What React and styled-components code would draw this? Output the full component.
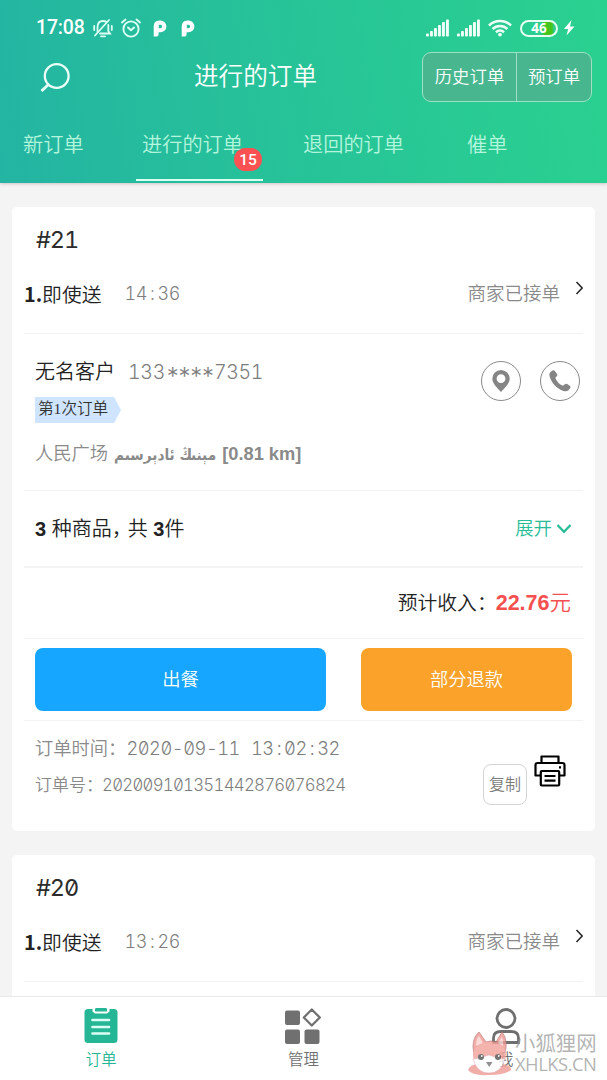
import React from "react";
import styled, { createGlobalStyle } from "styled-components";

const cjk = '"Noto Sans CJK SC", sans-serif';

const Global = createGlobalStyle`
  * { box-sizing: border-box; }
  body { margin: 0; background: #f4f4f4; }
`;

const Screen = styled.div`
  width: 607px;
  height: 1080px;
  display: flex;
  flex-direction: column;
  position: relative;
  overflow: hidden;
  background: #f4f4f4;
  font-family: "Liberation Sans", ${cjk};
  font-weight: 350;
  color: #222;
  white-space: nowrap;
`;

const Header = styled.header`
  flex: none;
  height: 183px;
  display: flex;
  flex-direction: column;
  color: #fff;
  background: linear-gradient(80deg, #24b4a3 0%, #26c09a 38%, #28c895 66%, #2ad18f 100%);
  box-shadow: 0 1px 3px rgba(120, 90, 100, 0.3);
  z-index: 1;
`;

const StatusBar = styled.div`
  height: 52px;
  padding: 4px 32px 0 36px;
  display: flex;
  align-items: center;
  justify-content: space-between;
`;

const StatusGroup = styled.div`
  display: flex;
  align-items: center;
  gap: ${(p) => p.$gap}px;
  padding-left: ${(p) => p.$pl || 0}px;
`;

const Clock = styled.span`
  font: 500 19.4px/24px Roboto, sans-serif;
  letter-spacing: -0.1px;
  width: 49px;
  margin-right: 0;
`;

const Battery = styled.span`
  width: 38px;
  height: 17px;
  margin: 0 -2px 0 0;
  border: 2px solid #e9fff4;
  border-radius: 9px;
  background: linear-gradient(90deg, transparent 54%, #45c51c 68% 88%, transparent 94%);
  font: 700 13.5px/13px "Open Sans", sans-serif;
  text-align: center;
`;

const TitleBar = styled.div`
  height: 50px;
  padding: 0 15px 0 38px;
  display: grid;
  grid-template-columns: 156px 1fr auto;
  align-items: center;
`;

const Title = styled.h1`
  margin: 0;
  font: 350 24.6px/36px ${cjk};
  padding-bottom: 6px;
`;

const Segmented = styled.div`
  height: 50px;
  display: flex;
  border: 1px solid #9fe0c5;
  border-radius: 9px;
  background: #48b68f;
`;

const Segment = styled.button`
  width: ${(p) => p.$w}px;
  padding: 0 0 2px;
  border: 0;
  border-left: ${(p) => (p.$divided ? "1px solid #9fe0c5" : "0")};
  background: none;
  color: #fff;
  font: 350 17.4px/26px ${cjk};
`;

const Tabs = styled.nav`
  flex: 1;
  display: flex;
  align-items: stretch;
`;

const Tab = styled.div`
  position: relative;
  width: ${(p) => p.$w}px;
  margin-left: ${(p) => p.$ml}px;
  padding: 27px 0 0 ${(p) => (p.$active ? 6 : 0)}px;
  height: 79px;
  border-bottom: 2px solid ${(p) => (p.$active ? "#d8fff2" : "transparent")};
  color: #b5f5dd;
  font: 350 20.2px/30px ${cjk};
`;

const Badge = styled.span`
  position: absolute;
  left: 98px;
  top: 46px;
  width: 28px;
  height: 23px;
  border-radius: 12px;
  background: #fb5152;
  color: #fff;
  font: 500 15.5px/24px Roboto, sans-serif;
  text-align: center;
`;

const Feed = styled.main`
  flex: 1;
  min-height: 0;
  overflow: hidden;
  padding: 24px 12px 0;
  display: flex;
  flex-direction: column;
  gap: 24px;
`;

const Card = styled.article`
  flex: none;
  height: 624px;
  padding: 0 12px;
  border-radius: 5px;
  background: #fff;
`;

const Row = styled.div`
  height: ${(p) => p.$h}px;
  padding: ${(p) => p.$pad || "0"};
  display: flex;
  align-items: ${(p) => p.$align || "center"};
  justify-content: ${(p) => p.$justify || "space-between"};
  border-bottom: ${(p) => p.$line || 0}px solid #f3f3f3;
`;

const MonoText = styled.span`
  font-family: Inter, ${cjk};
  font-size: ${(p) => p.$size}px;
  line-height: 28px;
  font-weight: ${(p) => p.$weight || 300};
  color: ${(p) => p.$color || "#7d7d7d"};
  letter-spacing: ${(p) => p.$ls || 0}px;
  word-spacing: 6.5px;
  font-feature-settings: "tnum" 1, "zero" 1;
`;

const Colon = styled.span`
  padding: 0 3px;
`;

const Stars = styled.span`
  font-size: 24px;
  line-height: 20px;
  vertical-align: -6px;
  letter-spacing: -3.8px;
  margin-right: 2px;
`;

const Han = styled.span`
  font-family: ${cjk};
  font-size: ${(p) => p.$size}px;
  line-height: 28px;
  font-weight: 350;
  color: ${(p) => p.$color || "#222"};
  padding-bottom: ${(p) => p.$up || 0}px;
  margin-right: ${(p) => p.$mr || 0}px;
  b { font-weight: 700; }
`;

const Mixed = styled(Han)`
  font-family: "Liberation Sans", ${cjk};
  white-space: pre;
`;

const Comma = styled.span`
  display: inline-block;
  width: 16px;
`;

const Inline = styled.div`
  display: flex;
  align-items: center;
  gap: ${(p) => p.$gap}px;
`;

const Stack = styled.div`
  display: flex;
  flex-direction: column;
  align-items: flex-start;
`;

const Ribbon = styled.span`
  width: 86px;
  height: 26px;
  margin: 9px 0 17px;
  padding-left: 3px;
  background: #cfe5ff;
  clip-path: polygon(0 0, 92% 0, 100% 50%, 92% 100%, 0 100%);
  color: #333;
  font: 350 15.6px/24px "Liberation Serif", ${cjk};
`;

const Uyghur = styled.bdi`
  font: 700 15.2px/26px "DejaVu Sans Condensed", "DejaVu Sans", sans-serif;
  display: inline-block;
  width: 102px;
  text-align: center;
  margin: 0 6px 0 6px;
`;

const RoundButton = styled.button`
  width: 40px;
  height: 40px;
  margin-top: 4px;
  padding: 0;
  border: 1px solid #8a8a8a;
  border-radius: 50%;
  background: #fff;
  display: grid;
  place-items: center;
`;

const Action = styled.button`
  width: ${(p) => p.$w}px;
  height: 63px;
  padding: 0 0 4px;
  border: 0;
  border-radius: 8px;
  background: ${(p) => p.$bg};
  color: #fff;
  font: 350 18.3px/28px ${cjk};
`;

const CopyButton = styled.button`
  width: 44px;
  height: 41px;
  padding: 0 0 3px;
  border: 1px solid #d4d4d4;
  border-radius: 8px;
  background: #fff;
  color: #7c7c7c;
  font: 350 16px/24px ${cjk};
`;

const BottomNav = styled.nav`
  flex: none;
  height: 84px;
  display: grid;
  grid-template-columns: repeat(3, 1fr);
  background: #fff;
  border-top: 1px solid #e9e9e9;
`;

const NavItem = styled.div`
  display: flex;
  flex-direction: column;
  align-items: center;
  padding-top: 10px;
  color: ${(p) => p.$color};
  font: 350 15.4px/22px ${cjk};
  svg { margin-bottom: 3px; }
`;

const Watermark = styled.div`
  position: absolute;
  left: 467px;
  top: 1030px;
  display: flex;
  color: rgba(150, 150, 150, 0.72);
`;

const WatermarkText = styled.div`
  display: flex;
  flex-direction: column;
  margin-left: 2px;
  padding-top: 2px;
  font: 400 20.4px/22px "Open Sans", ${cjk};
`;

const WatermarkSite = styled.span`
  font-size: 18.4px;
  line-height: 20px;
  letter-spacing: -0.5px;
`;

const Svg = ({ w, h, children, ...rest }) => (
  <svg width={w} height={h} viewBox={`0 0 ${w} ${h}`} fill="none" {...rest}>{children}</svg>
);

const MuteIcon = () => (
  <Svg w={20} h={20} stroke="#dffff5" strokeWidth="1.8" strokeLinecap="round">
    <path d="M4.500 14V9.500C4.500 5.500 6.500 3 10 3C11.500 3 12.600 3.400 13.500 4.200M15.300 7V13L17 15.500H7" />
    <path d="M2 17.500L16 2M8 18.300H12M1.200 8V12M18.800 8V12" />
  </Svg>
);

const AlarmIcon = () => (
  <Svg w={20} h={20} stroke="#dffff5" strokeWidth="1.9" strokeLinecap="round" strokeLinejoin="round">
    <circle cx="10" cy="11" r="7.600" />
    <path d="M7 9.500L10 12.300L13 9.500M1 4.500L4.500 1.500M19 4.500L15.500 1.500" />
  </Svg>
);

const ParkIcon = () => (
  <Svg w={14} h={17}>
    <path fillRule="evenodd" fill="#fff" d="M6.500 .5H7.500A5.900 5.900 0 0 1 7.500 12.300H5.600V14.500Q5.600 16.500 3.600 16.500H.7V6.500Q.7 .5 6.500 .5ZM5.800 4.800V8.300H7.400A1.750 1.750 0 0 0 7.400 4.800Z" />
  </Svg>
);

const SignalIcon = () => (
  <Svg w={23} h={18}>
    {[3, 5.500, 8.500, 11.500, 14.500, 17].map((h, i) => (
      <rect key={i} x={i * 4} y={17.500 - h} width="2.900" height={h} rx=".8" fill="#effff8" />
    ))}
  </Svg>
);

const WifiIcon = () => (
  <Svg w={24} h={18} stroke="#effff8" strokeWidth="2.500">
    <path d="M1 6.500A15.500 15.500 0 0 1 23 6.500M4.600 10A10.500 10.500 0 0 1 19.400 10M8 13.300A5.600 5.600 0 0 1 16 13.300" />
    <circle cx="12" cy="15.600" r="1.900" fill="#effff8" stroke="none" />
  </Svg>
);

const BoltIcon = () => (
  <Svg w={11} h={16}><path fill="#fff" d="M7.500 0L0 9H4.200L2.500 15.500L10.500 6.500H6Z" /></Svg>
);

const SearchIcon = () => (
  <Svg w={32} h={30} stroke="#e9fff8" strokeWidth="2.300">
    <circle cx="18.700" cy="14" r="11.900" />
    <path d="M10.500 22.500L3.500 29" strokeWidth="2.800" />
  </Svg>
);

const ArrowRight = () => (
  <Svg w={10} h={14} stroke="#222" strokeWidth="1.500"><path d="M3.500 1L9.200 7L3.500 13" /></Svg>
);

const ArrowDown = () => (
  <Svg w={16} h={12} stroke="#27bd98" strokeWidth="2.300"><path d="M1.500 2L8 8.800L14.500 2" /></Svg>
);

const PinIcon = () => (
  <Svg w={18} h={22}>
    <path fillRule="evenodd" fill="#858585" d="M9 0A8.700 8.700 0 0 1 17.700 8.700C17.700 13.500 12.500 18 9 22C5.500 18 .3 13.500 .3 8.700A8.700 8.700 0 0 1 9 0ZM9 4.200A4.400 4.400 0 1 0 9 13A4.400 4.400 0 1 0 9 4.200Z" />
  </Svg>
);

const PhoneIcon = () => (
  <Svg w={22} h={22}>
    <path fill="#858585" d="M1.200 2.200L4 .3Q5 0 5.700 .8L8.200 4.300Q8.700 5.200 8 6L6.300 7.800Q8.300 13.500 14 15.800L15.800 14.300Q17 13.300 18.200 14L21 16Q22 17 21.300 18L19.500 20.300Q17.500 22 14.500 21C7.500 18.500 2.500 13 .5 6Q0 3.500 1.200 2.200Z" />
  </Svg>
);

const PrinterIcon = () => (
  <Svg w={32} h={32} stroke="#000" strokeWidth="2.200" strokeLinejoin="round">
    <path d="M7.500 8V1.500H24.500V8M6.500 20.500H1.500V10Q1.500 8 3.500 8H28.500Q30.500 8 30.500 10V20.500H25.500" />
    <rect x="6.800" y="16" width="18.400" height="14.500" rx="1" />
    <path d="M10.500 21H21.500M10.500 25.700H21.500M25 12.300H27" />
  </Svg>
);

const OrdersIcon = () => (
  <Svg w={34} h={37}>
    <rect x=".5" y="2" width="33" height="34" rx="3.500" fill="#25b795" />
    <path d="M8.500 0H25.500V4.500L23 6.500H11L8.500 4.500Z" fill="#fff" />
    <rect x="11" y="1" width="12" height="3.600" rx="1.200" fill="#25b795" />
    <path d="M8.500 13H25M8.500 20H25M8.500 26.500H25" stroke="#dcfff5" strokeWidth="2.700" strokeLinecap="round" />
  </Svg>
);

const ManageIcon = () => (
  <Svg w={36} h={37}>
    <rect x="0" y="3.500" width="15" height="14.500" rx="2" fill="#707070" />
    <rect x="0" y="22.500" width="15" height="14.500" rx="2" fill="#707070" />
    <rect x="19.500" y="22.500" width="15" height="14.500" rx="2" fill="#707070" />
    <path d="M26.800 2.500L34.800 10.500L26.800 18.500L18.800 10.500Z" stroke="#707070" strokeWidth="2.300" strokeLinejoin="round" />
  </Svg>
);

const UserIcon = () => (
  <Svg w={28} h={37} stroke="#6f6f6f" strokeWidth="2.800">
    <circle cx="14" cy="11.500" r="9" />
    <path d="M1.500 35.500V31Q1.500 24.500 9 24.500H19Q26.500 24.500 26.500 31V35.500Z" />
  </Svg>
);

const FoxLogo = () => (
  <Svg w={46} h={46} opacity=".82">
    <path d="M1 40Q3 34 12 34H36Q45 36 44 40Q38 45 22 45Q5 46 1 40Z" fill="#ef9c96" />
    <path d="M6 17Q6 7 12 2L19 12Q24 10 29 12L35 2Q40 8 39 18L37 25H7Z" fill="#f09a94" stroke="#b5736f" strokeWidth=".8" />
    <path d="M9 16Q9 9 12 6L16 13ZM31 13L35 7Q37 11 36 16Z" fill="#fbd5d1" />
    <ellipse cx="22.500" cy="25" rx="16.500" ry="13" fill="#f4a39c" />
    <path d="M6 29Q14 28 22 25Q29 28 38 29Q34 43 22 43Q10 43 6 29Z" fill="#fff" stroke="#d99" strokeWidth=".5" />
    <circle cx="14" cy="27" r="3" fill="#555" /><circle cx="31" cy="27" r="3" fill="#555" />
    <circle cx="14.800" cy="26" r=".9" fill="#fff" /><circle cx="31.800" cy="26" r=".9" fill="#fff" />
    <path d="M19 32H25.500L22.200 37Z" fill="#777" />
  </Svg>
);

const Mono = ({ text, ...rest }) => (
  <MonoText {...rest}>
    {text.split(/(:|\*+)/).map((part, i) => {
      if (part === ":") return <Colon key={i}>:</Colon>;
      if (part.startsWith("*")) return <Stars key={i}>{part}</Stars>;
      return part;
    })}
  </MonoText>
);

const OrderHead = ({ number, time }) => (
  <>
    <Row $h={65} $pad="0 0 0 12px"><Mono $size={23.5} $weight={400} $color="#2c2c2c" $ls={-1.1} text={number} /></Row>
    <Row $h={62} $line={1} $pad="0 0 17px">
      <Inline $gap={23}>
        <Han $size={19.8}><b>1.</b>即使送</Han>
        <Mono $size={18} $ls={-0.4} text={time} />
      </Inline>
      <Inline $gap={13}>
        <Han $size={18.5} $color="#8a8a8a" $up={4}>商家已接单</Han>
        <Row $h={28} $pad="0 0 12px"><ArrowRight /></Row>
      </Inline>
    </Row>
  </>
);

export default function App() {
  return (
    <Screen>
      <Global />
      <Header>
        <StatusBar>
          <StatusGroup $gap={8}>
            <Clock>17:08</Clock>
            <MuteIcon /><AlarmIcon />
            <StatusGroup $gap={14} $pl={4}><ParkIcon /><ParkIcon /></StatusGroup>
          </StatusGroup>
          <StatusGroup $gap={8}>
            <SignalIcon /><SignalIcon /><WifiIcon /><Battery>46</Battery><BoltIcon />
          </StatusGroup>
        </StatusBar>
        <TitleBar>
          <SearchIcon />
          <Title>进行的订单</Title>
          <Segmented>
            <Segment $w={93}>历史订单</Segment>
            <Segment $w={75} $divided>预订单</Segment>
          </Segmented>
        </TitleBar>
        <Tabs>
          <Tab $ml={23} $w={62}>新订单</Tab>
          <Tab $ml={51} $w={127} $active>进行的订单<Badge>15</Badge></Tab>
          <Tab $ml={40} $w={102}>退回的订单</Tab>
          <Tab $ml={62} $w={42}>催单</Tab>
        </Tabs>
      </Header>

      <Feed>
        <Card>
          <OrderHead number="#21" time="14:36" />
          <Row $h={157} $line={1} $align="flex-start" $pad="23px 3px 0 11px">
            <Stack>
              <Inline $gap={13}>
                <Han $size={20} $up={3}>无名客户</Han>
                <Mono $size={19.5} $ls={-0.3} text="133****7351" />
              </Inline>
              <Ribbon>第1次订单</Ribbon>
              <Mixed $size={18.3} $color="#8a8a8a">人民广场<Uyghur lang="ug">مېنىڭ ئادېرسىم</Uyghur><b>[0.81 km]</b></Mixed>
            </Stack>
            <Inline $gap={19}>
              <RoundButton aria-label="位置"><PinIcon /></RoundButton>
              <RoundButton aria-label="电话"><PhoneIcon /></RoundButton>
            </Inline>
          </Row>
          <Row $h={77} $line={2} $pad="0 11px 0 11px">
            <Mixed $size={20}><b>3</b> 种商品<Comma>，</Comma>共 <b>3</b>件</Mixed>
            <Inline $gap={4}><Han $size={18.4} $color="#27bd98" $up={3}>展开</Han><ArrowDown /></Inline>
          </Row>
          <Row $h={71} $line={1} $justify="flex-end" $pad="0 12px 0 0">
            <Han $size={19.8} $up={2} $mr={-1}>预计收入：</Han>
            <Mixed $size={21.5} $color="#f5504f"><b>22.76</b>元</Mixed>
          </Row>
          <Row $h={82} $line={1} $pad="0 11px">
            <Action $w={291} $bg="#16a5ff">出餐</Action>
            <Action $w={211} $bg="#faa22a">部分退款</Action>
          </Row>
          <Row $h={100} $align="flex-start" $pad="12px 17px 0 11px">
            <Stack>
              <Inline $gap={0}><Han $size={18.3} $color="#8a8a8a" $up={2}>订单时间：</Han><Mono $size={18.3} $ls={-0.47} text="2020-09-11 13:02:32" /></Inline>
              <Row $h={43}><Inline $gap={0}><Han $size={17} $color="#8a8a8a" $up={2} $mr={-1}>订单号：</Han><Mono $size={16.8} $ls={-0.72} text="202009101351442876076824" /></Inline></Row>
            </Stack>
            <Row $h={72} $align="flex-end">
              <CopyButton>复制</CopyButton>
              <Row $h={50} $align="flex-start" $pad="0 0 0 7px"><PrinterIcon /></Row>
            </Row>
          </Row>
        </Card>
        <Card>
          <OrderHead number="#20" time="13:26" />
        </Card>
      </Feed>

      <BottomNav>
        <NavItem $color="#25b795"><OrdersIcon />订单</NavItem>
        <NavItem $color="#707070"><ManageIcon />管理</NavItem>
        <NavItem $color="#707070"><UserIcon />我</NavItem>
      </BottomNav>

      <Watermark>
        <FoxLogo />
        <WatermarkText>
          <span>小狐狸网</span>
          <WatermarkSite>XHLKS.CN</WatermarkSite>
        </WatermarkText>
      </Watermark>
    </Screen>
  );
}
